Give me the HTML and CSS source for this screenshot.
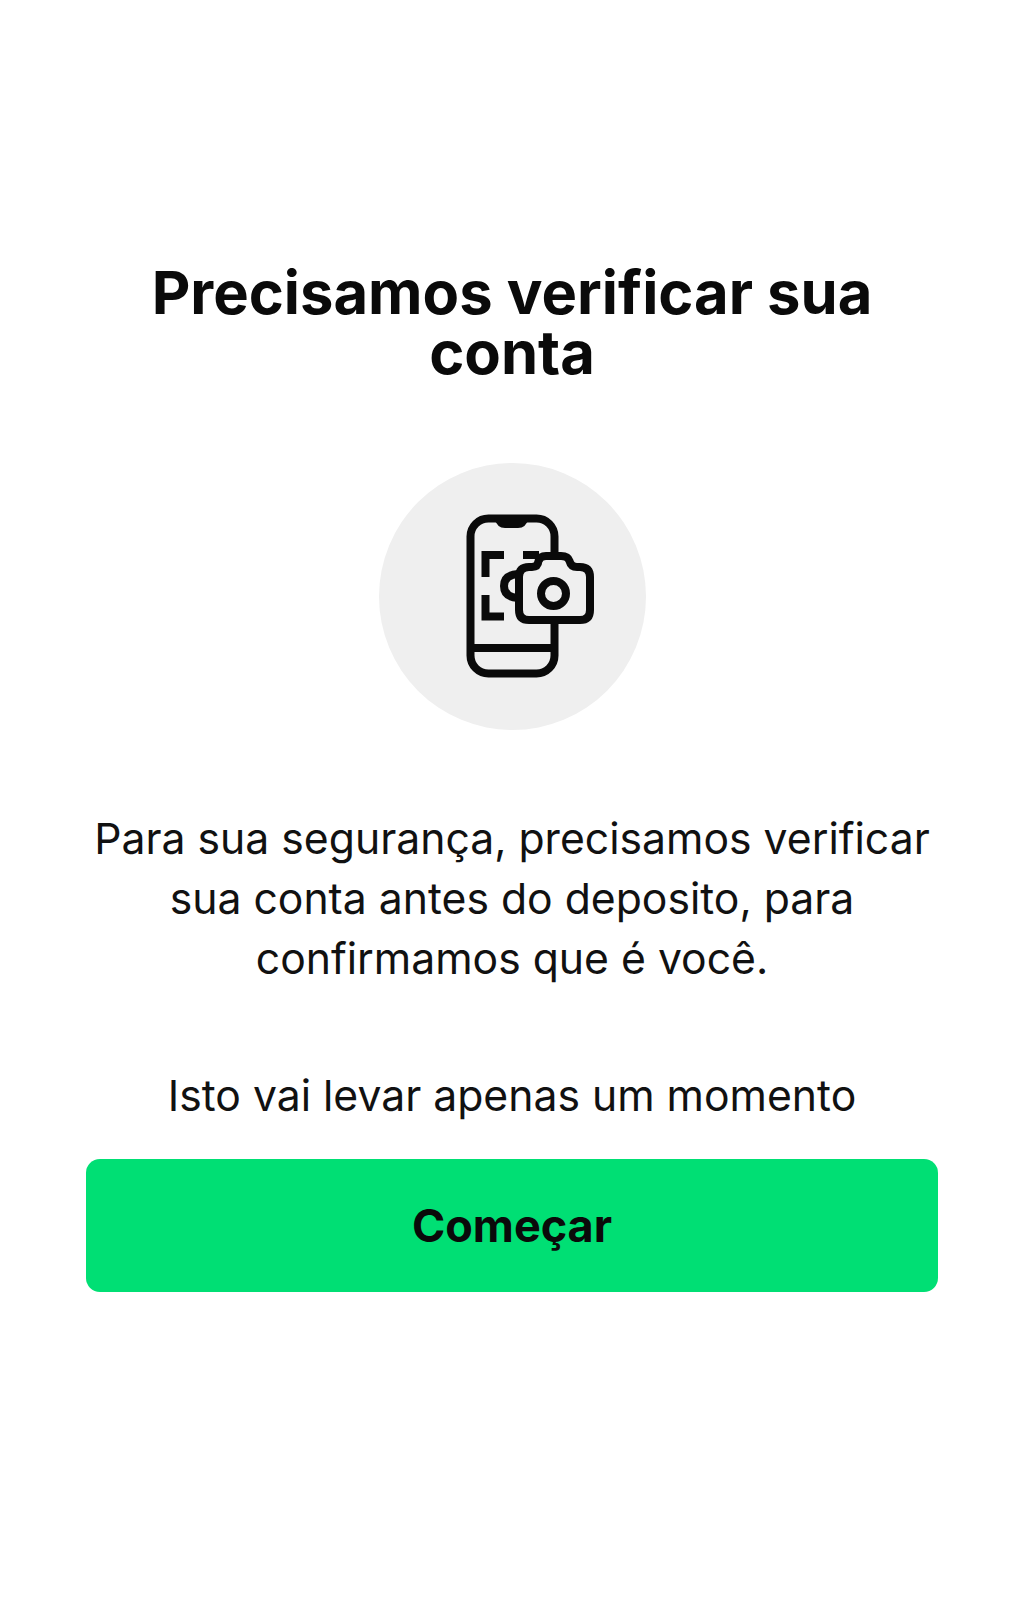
FILE: index.html
```html
<!DOCTYPE html>
<html lang="pt-BR">
<head>
  <title>Verificar conta</title>
  <meta name="viewport" content="width=device-width, initial-scale=1">
  <link rel="stylesheet" href="styles.css">
</head>
<body>
  <div class="container">
    <h1 class="title">Precisamos verificar sua conta</h1>

    <div class="icon-circle">
      <svg class="icon" width="130" height="168" viewBox="0 0 130 168" fill="none" stroke="#0a0a0a" stroke-width="8">
        <!-- phone -->
        <rect x="5.5" y="7.5" width="84" height="155" rx="18"/>
        <path d="M29 7 Q32 17 40 17 H53 Q61 17 64 7 Z" fill="#0a0a0a" stroke="none"/>
        <path d="M5.5 137 H89.5"/>
        <!-- scan corners -->
        <path d="M39 44 H20.5 V66"/>
        <path d="M20.5 84 V105.500 H39"/>
        <path d="M58 44 H74"/>
        <!-- face -->
        <path d="M53 63 Q39 64 39 75 Q39 86 53 87"/>
        <!-- camera -->
        <path d="M64 56 H67 Q73 56 73.500 50 Q75 45 81 45 H96 Q103 45 104.500 50 Q106 56 112 56 H115 Q125 56 125 66 V99 Q125 109 115 109 H64 Q54 109 54 99 V66 Q54 56 64 56 Z" fill="#efefef"/>
        <circle cx="88.500" cy="82.500" r="12.500"/>
      </svg>
    </div>

    <p class="message">Para sua segurança, precisamos verificar sua conta antes do deposito, para confirmamos que é você.</p>
    <p class="note">Isto vai levar apenas um momento</p>

    <button class="start-btn">Começar</button>
  </div>
</body>
</html>
```

FILE: styles.css
```css
body {
  margin: 0;
  background-color: #fff;
  font-family: Inter, "Liberation Sans", sans-serif;
  color: #111;
}
.container {
  display: flex;
  flex-direction: column;
  align-items: center;
  padding: 262px 86px 0;
  height: 1599px;
  box-sizing: border-box;
  overflow: hidden;
  text-align: center;
}
.title {
  margin: 0 0 81px;
  font-size: 59.7px;
  line-height: 60px;
  font-weight: 700;
  color: #0a0a0a;
}
/* the icon sits right of centre in the circle */
.icon-circle {
  width: 267px;
  height: 267px;
  box-sizing: border-box;
  padding: 0 0 4px 36px;
  border-radius: 50%;
  background-color: #efefef;
  display: flex;
  align-items: center;
  justify-content: center;
  margin-bottom: 79px;
}
.icon {
  display: block;
  flex-shrink: 0;
}
.message {
  margin: 0 0 77px;
  font-size: 42.7px;
  line-height: 60px;
  font-weight: 400;
}
.note {
  margin: 0 0 33px;
  font-size: 42.7px;
  line-height: 60px;
  font-weight: 400;
}
.start-btn {
  width: 100%;
  height: 133px;
  flex-shrink: 0;
  border: none;
  border-radius: 14px;
  background-color: #00df74;
  color: #0a0a0a;
  font-family: inherit;
  font-size: 45px;
  font-weight: 700;
}
```
